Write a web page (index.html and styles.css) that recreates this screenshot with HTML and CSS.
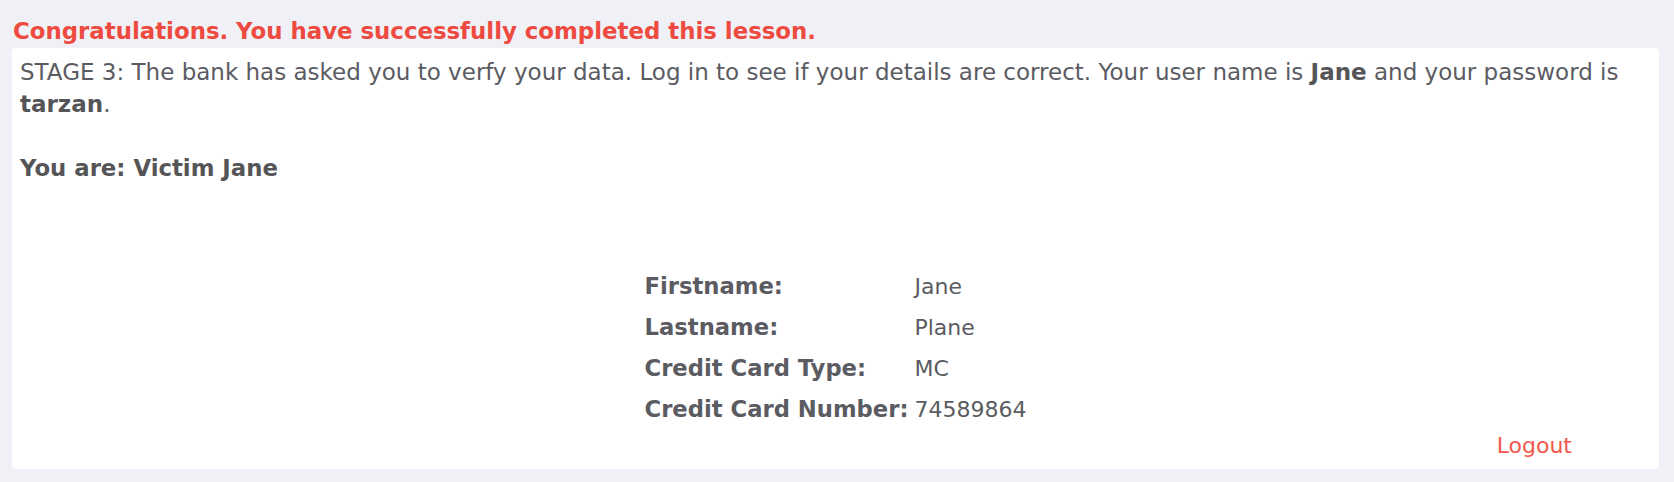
FILE: index.html
```html
<!DOCTYPE html>
<html>
<head>
<meta charset="utf-8">
<link rel="stylesheet" href="styles.css">
</head>
<body>
<div class="page">
  <div class="congrats">Congratulations. You have successfully completed this lesson.</div>
  <div class="panel">
    <p class="intro">STAGE 3: The bank has asked you to verfy your data. Log in to see if your details are correct. Your user name is <b>Jane</b> and your password is <b>tarzan</b>.</p>
    <p class="you"><b>You are: Victim Jane</b></p>
    <div class="details">
      <div class="label">Firstname:</div><div class="value">Jane</div>
      <div class="label">Lastname:</div><div class="value">Plane</div>
      <div class="label">Credit Card Type:</div><div class="value">MC</div>
      <div class="label">Credit Card Number:</div><div class="value">74589864</div>
    </div>
    <div class="logout-row"><a class="logout" href="#">Logout</a></div>
  </div>
</div>
</body>
</html>
```

FILE: styles.css
```css
html, body {
  margin: 0;
  padding: 0;
  background: #f0f1f6;
}
body {
  font-family: "DejaVu Sans", sans-serif;
  font-size: 23px;
  color: #5b5b62;
}
.page {
  padding: 14px 15px 13px 12px;
}
.congrats {
  color: #ee4a3f;
  font-weight: bold;
  font-size: 22.85px;
  line-height: 34px;
  padding-left: 1px;
}
.panel {
  background: #fff;
  border-radius: 4px;
  padding: 8px 8px 8px 8px;
  height: 421px;
  box-sizing: border-box;
}
.intro {
  margin: 0;
  line-height: 32px;
}
.intro b, .you b {
  color: #555558;
}
.you {
  margin: 32px 0 0;
  line-height: 32px;
  font-size: 22.8px;
}
.details {
  display: grid;
  grid-template-columns: auto auto;
  justify-content: center;
  margin-top: 82px;
}
.label {
  font-weight: bold;
  font-size: 22.7px;
  line-height: 41px;
  padding-right: 6px;
}
.value {
  font-size: 22px;
  line-height: 41px;
}
.logout-row {
  display: flex;
  justify-content: flex-end;
  padding-right: 79px;
}
.logout {
  color: #f0584d;
  font-size: 22px;
  text-decoration: none;
  line-height: 32px;
}
```
